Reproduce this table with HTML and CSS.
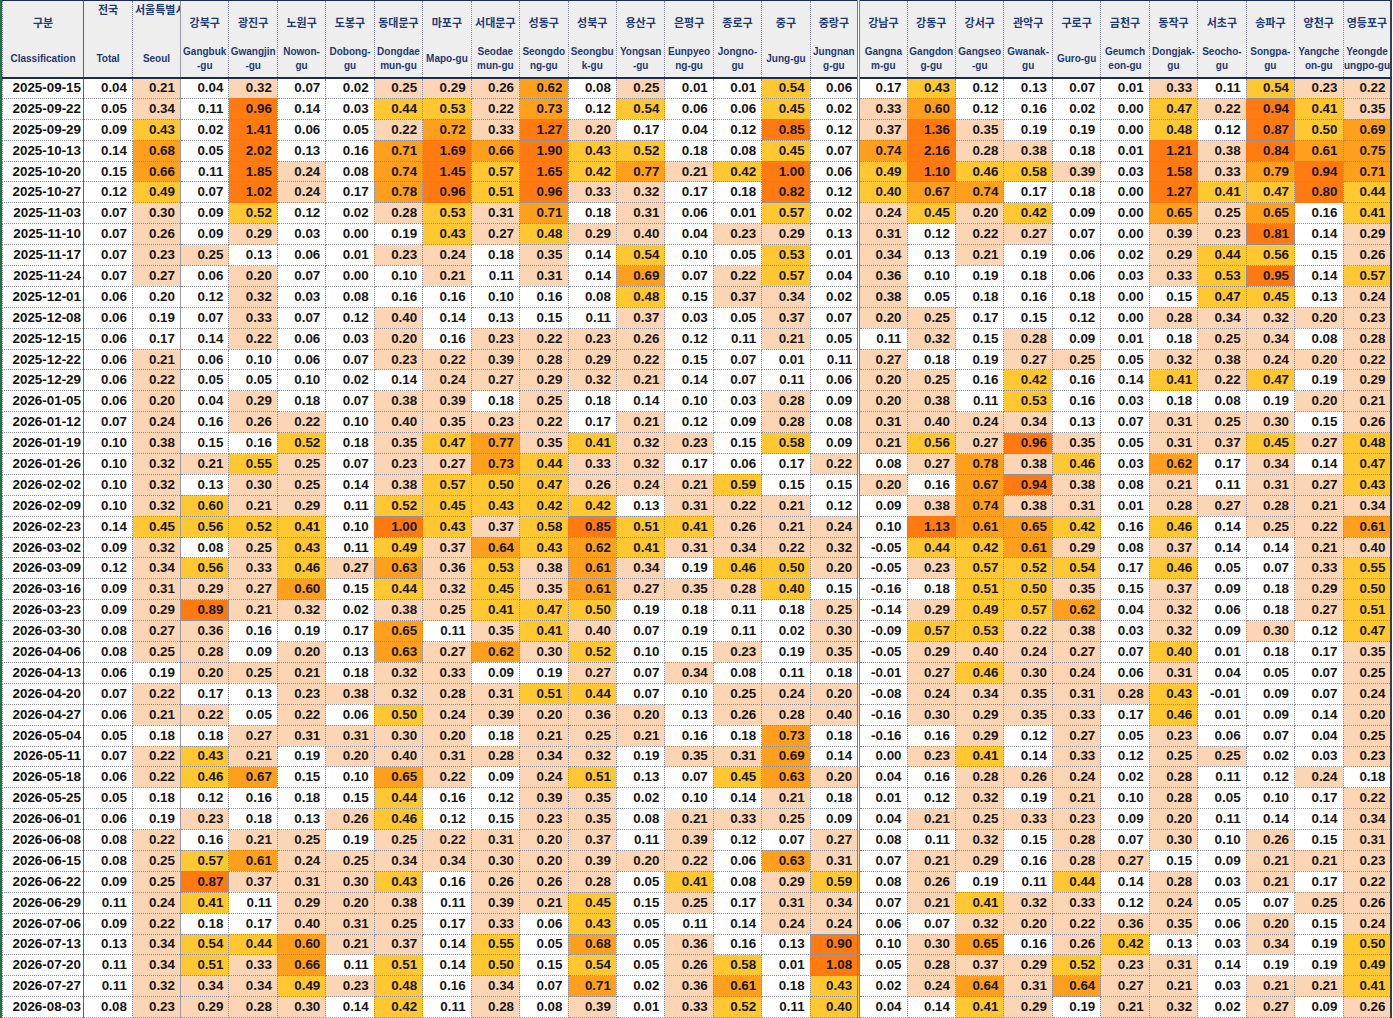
FILE: index.html
```html
<!DOCTYPE html>
<html lang="ko">
<head>
<meta charset="utf-8">
<title>서울 주간 아파트 매매가격 변동률</title>
<link rel="stylesheet" href="styles.css">
</head>
<body>
<div class="sheet">
<table class="grid">
<colgroup>
<col class="c-date"><col class="c-total"><col class="c-seoul">
<col class="c-gu"><col class="c-gu"><col class="c-gu"><col class="c-gu"><col class="c-gu"><col class="c-gu"><col class="c-gu"><col class="c-gu"><col class="c-gu"><col class="c-gu"><col class="c-gu"><col class="c-gu"><col class="c-gu"><col class="c-gu">
<col class="c-gu"><col class="c-gu"><col class="c-gu"><col class="c-gu"><col class="c-gu"><col class="c-gu"><col class="c-gu"><col class="c-gu"><col class="c-gu"><col class="c-gu"><col class="c-gu">
</colgroup>
<thead>
<tr>
<th><div class="ko">구분</div><div class="en">Classification</div></th>
<th class="top"><div class="ko">전국</div><div class="en">Total</div></th>
<th class="top"><div class="ko clip">서울특별시</div><div class="en">Seoul</div></th>
<th><div class="ko">강북구</div><div class="en">Gangbuk<br>-gu</div></th>
<th><div class="ko">광진구</div><div class="en">Gwangjin<br>-gu</div></th>
<th><div class="ko">노원구</div><div class="en">Nowon-<br>gu</div></th>
<th><div class="ko">도봉구</div><div class="en">Dobong-<br>gu</div></th>
<th><div class="ko">동대문구</div><div class="en">Dongdae<br>mun-gu</div></th>
<th><div class="ko">마포구</div><div class="en">Mapo-gu</div></th>
<th><div class="ko">서대문구</div><div class="en">Seodae<br>mun-gu</div></th>
<th><div class="ko">성동구</div><div class="en">Seongdo<br>ng-gu</div></th>
<th><div class="ko">성북구</div><div class="en">Seongbu<br>k-gu</div></th>
<th><div class="ko">용산구</div><div class="en">Yongsan<br>-gu</div></th>
<th><div class="ko">은평구</div><div class="en">Eunpyeo<br>ng-gu</div></th>
<th><div class="ko">종로구</div><div class="en">Jongno-<br>gu</div></th>
<th><div class="ko">중구</div><div class="en">Jung-gu</div></th>
<th><div class="ko">중랑구</div><div class="en">Jungnan<br>g-gu</div></th>
<th><div class="ko">강남구</div><div class="en">Gangna<br>m-gu</div></th>
<th><div class="ko">강동구</div><div class="en">Gangdon<br>g-gu</div></th>
<th><div class="ko">강서구</div><div class="en">Gangseo<br>-gu</div></th>
<th><div class="ko">관악구</div><div class="en">Gwanak-<br>gu</div></th>
<th><div class="ko">구로구</div><div class="en">Guro-gu</div></th>
<th><div class="ko">금천구</div><div class="en">Geumch<br>eon-gu</div></th>
<th><div class="ko">동작구</div><div class="en">Dongjak-<br>gu</div></th>
<th><div class="ko">서초구</div><div class="en">Seocho-<br>gu</div></th>
<th><div class="ko">송파구</div><div class="en">Songpa-<br>gu</div></th>
<th><div class="ko">양천구</div><div class="en">Yangche<br>on-gu</div></th>
<th><div class="ko">영등포구</div><div class="en">Yeongde<br>ungpo-gu</div></th>
</tr>
</thead>
<tbody>
<tr><td class="dt">2025-09-15</td><td>0.04</td><td class="l1">0.21</td><td>0.04</td><td class="l1">0.32</td><td>0.07</td><td>0.02</td><td class="l1">0.25</td><td class="l1">0.29</td><td class="l1">0.26</td><td class="l3">0.62</td><td>0.08</td><td class="l1">0.25</td><td>0.01</td><td>0.01</td><td class="l2">0.54</td><td>0.06</td><td>0.17</td><td class="l2">0.43</td><td>0.12</td><td>0.13</td><td>0.07</td><td>0.01</td><td class="l1">0.33</td><td>0.11</td><td class="l2">0.54</td><td class="l1">0.23</td><td class="l1">0.22</td></tr>
<tr><td class="dt">2025-09-22</td><td>0.05</td><td class="l1">0.34</td><td>0.11</td><td class="l4">0.96</td><td>0.14</td><td>0.03</td><td class="l2">0.44</td><td class="l2">0.53</td><td class="l1">0.22</td><td class="l3">0.73</td><td>0.12</td><td class="l2">0.54</td><td>0.06</td><td>0.06</td><td class="l2">0.45</td><td>0.02</td><td class="l1">0.33</td><td class="l3">0.60</td><td>0.12</td><td>0.16</td><td>0.02</td><td>0.00</td><td class="l2">0.47</td><td class="l1">0.22</td><td class="l4">0.94</td><td class="l2">0.41</td><td class="l1">0.35</td></tr>
<tr><td class="dt">2025-09-29</td><td>0.09</td><td class="l2">0.43</td><td>0.02</td><td class="l4">1.41</td><td>0.06</td><td>0.05</td><td class="l1">0.22</td><td class="l3">0.72</td><td class="l1">0.33</td><td class="l4">1.27</td><td class="l1">0.20</td><td>0.17</td><td>0.04</td><td>0.12</td><td class="l4">0.85</td><td>0.12</td><td class="l1">0.37</td><td class="l4">1.36</td><td class="l1">0.35</td><td>0.19</td><td>0.19</td><td>0.00</td><td class="l2">0.48</td><td>0.12</td><td class="l4">0.87</td><td class="l2">0.50</td><td class="l3">0.69</td></tr>
<tr><td class="dt">2025-10-13</td><td>0.14</td><td class="l3">0.68</td><td>0.05</td><td class="l4">2.02</td><td>0.13</td><td>0.16</td><td class="l3">0.71</td><td class="l4">1.69</td><td class="l3">0.66</td><td class="l4">1.90</td><td class="l2">0.43</td><td class="l2">0.52</td><td>0.18</td><td>0.08</td><td class="l2">0.45</td><td>0.07</td><td class="l3">0.74</td><td class="l4">2.16</td><td class="l1">0.28</td><td class="l1">0.38</td><td>0.18</td><td>0.01</td><td class="l4">1.21</td><td class="l1">0.38</td><td class="l4">0.84</td><td class="l3">0.61</td><td class="l3">0.75</td></tr>
<tr><td class="dt">2025-10-20</td><td>0.15</td><td class="l3">0.66</td><td>0.11</td><td class="l4">1.85</td><td class="l1">0.24</td><td>0.08</td><td class="l3">0.74</td><td class="l4">1.45</td><td class="l2">0.57</td><td class="l4">1.65</td><td class="l2">0.42</td><td class="l3">0.77</td><td class="l1">0.21</td><td class="l2">0.42</td><td class="l4">1.00</td><td>0.06</td><td class="l2">0.49</td><td class="l4">1.10</td><td class="l2">0.46</td><td class="l2">0.58</td><td class="l1">0.39</td><td>0.03</td><td class="l4">1.58</td><td class="l1">0.33</td><td class="l3">0.79</td><td class="l4">0.94</td><td class="l3">0.71</td></tr>
<tr><td class="dt">2025-10-27</td><td>0.12</td><td class="l2">0.49</td><td>0.07</td><td class="l4">1.02</td><td class="l1">0.24</td><td>0.17</td><td class="l3">0.78</td><td class="l4">0.96</td><td class="l2">0.51</td><td class="l4">0.96</td><td class="l1">0.33</td><td class="l1">0.32</td><td>0.17</td><td>0.18</td><td class="l4">0.82</td><td>0.12</td><td class="l2">0.40</td><td class="l3">0.67</td><td class="l3">0.74</td><td>0.17</td><td>0.18</td><td>0.00</td><td class="l4">1.27</td><td class="l2">0.41</td><td class="l2">0.47</td><td class="l4">0.80</td><td class="l2">0.44</td></tr>
<tr><td class="dt">2025-11-03</td><td>0.07</td><td class="l1">0.30</td><td>0.09</td><td class="l2">0.52</td><td>0.12</td><td>0.02</td><td class="l1">0.28</td><td class="l2">0.53</td><td class="l1">0.31</td><td class="l3">0.71</td><td>0.18</td><td class="l1">0.31</td><td>0.06</td><td>0.01</td><td class="l2">0.57</td><td>0.02</td><td class="l1">0.24</td><td class="l2">0.45</td><td class="l1">0.20</td><td class="l2">0.42</td><td>0.09</td><td>0.00</td><td class="l3">0.65</td><td class="l1">0.25</td><td class="l3">0.65</td><td>0.16</td><td class="l2">0.41</td></tr>
<tr><td class="dt">2025-11-10</td><td>0.07</td><td class="l1">0.26</td><td>0.09</td><td class="l1">0.29</td><td>0.03</td><td>0.00</td><td>0.19</td><td class="l2">0.43</td><td class="l1">0.27</td><td class="l2">0.48</td><td class="l1">0.29</td><td class="l1">0.40</td><td>0.04</td><td class="l1">0.23</td><td class="l1">0.29</td><td>0.13</td><td class="l1">0.31</td><td>0.12</td><td class="l1">0.22</td><td class="l1">0.27</td><td>0.07</td><td>0.00</td><td class="l1">0.39</td><td class="l1">0.23</td><td class="l4">0.81</td><td>0.14</td><td class="l1">0.29</td></tr>
<tr><td class="dt">2025-11-17</td><td>0.07</td><td class="l1">0.23</td><td class="l1">0.25</td><td>0.13</td><td>0.06</td><td>0.01</td><td class="l1">0.23</td><td class="l1">0.24</td><td>0.18</td><td class="l1">0.35</td><td>0.14</td><td class="l2">0.54</td><td>0.10</td><td>0.05</td><td class="l2">0.53</td><td>0.01</td><td class="l1">0.34</td><td>0.13</td><td class="l1">0.21</td><td>0.19</td><td>0.06</td><td>0.02</td><td class="l1">0.29</td><td class="l2">0.44</td><td class="l2">0.56</td><td>0.15</td><td class="l1">0.26</td></tr>
<tr><td class="dt">2025-11-24</td><td>0.07</td><td class="l1">0.27</td><td>0.06</td><td class="l1">0.20</td><td>0.07</td><td>0.00</td><td>0.10</td><td class="l1">0.21</td><td>0.11</td><td class="l1">0.31</td><td>0.14</td><td class="l3">0.69</td><td>0.07</td><td class="l1">0.22</td><td class="l2">0.57</td><td>0.04</td><td class="l1">0.36</td><td>0.10</td><td>0.19</td><td>0.18</td><td>0.06</td><td>0.03</td><td class="l1">0.33</td><td class="l2">0.53</td><td class="l4">0.95</td><td>0.14</td><td class="l2">0.57</td></tr>
<tr><td class="dt">2025-12-01</td><td>0.06</td><td>0.20</td><td>0.12</td><td class="l1">0.32</td><td>0.03</td><td>0.08</td><td>0.16</td><td>0.16</td><td>0.10</td><td>0.16</td><td>0.08</td><td class="l2">0.48</td><td>0.15</td><td class="l1">0.37</td><td class="l1">0.34</td><td>0.02</td><td class="l1">0.38</td><td>0.05</td><td>0.18</td><td>0.16</td><td>0.18</td><td>0.00</td><td>0.15</td><td class="l2">0.47</td><td class="l2">0.45</td><td>0.13</td><td class="l1">0.24</td></tr>
<tr><td class="dt">2025-12-08</td><td>0.06</td><td>0.19</td><td>0.07</td><td class="l1">0.33</td><td>0.07</td><td>0.12</td><td class="l1">0.40</td><td>0.14</td><td>0.13</td><td>0.15</td><td>0.11</td><td class="l1">0.37</td><td>0.03</td><td>0.05</td><td class="l1">0.37</td><td>0.07</td><td class="l1">0.20</td><td class="l1">0.25</td><td>0.17</td><td>0.15</td><td>0.12</td><td>0.00</td><td class="l1">0.28</td><td class="l1">0.34</td><td class="l1">0.32</td><td class="l1">0.20</td><td class="l1">0.23</td></tr>
<tr><td class="dt">2025-12-15</td><td>0.06</td><td>0.17</td><td>0.14</td><td class="l1">0.22</td><td>0.06</td><td>0.03</td><td class="l1">0.20</td><td>0.16</td><td class="l1">0.23</td><td class="l1">0.22</td><td class="l1">0.23</td><td class="l1">0.26</td><td>0.12</td><td>0.11</td><td class="l1">0.21</td><td>0.05</td><td>0.11</td><td class="l1">0.32</td><td>0.15</td><td class="l1">0.28</td><td>0.09</td><td>0.01</td><td>0.18</td><td class="l1">0.25</td><td class="l1">0.34</td><td>0.08</td><td class="l1">0.28</td></tr>
<tr><td class="dt">2025-12-22</td><td>0.06</td><td class="l1">0.21</td><td>0.06</td><td>0.10</td><td>0.06</td><td>0.07</td><td class="l1">0.23</td><td class="l1">0.22</td><td class="l1">0.39</td><td class="l1">0.28</td><td class="l1">0.29</td><td class="l1">0.22</td><td>0.15</td><td>0.07</td><td>0.01</td><td>0.11</td><td class="l1">0.27</td><td>0.18</td><td>0.19</td><td class="l1">0.27</td><td class="l1">0.25</td><td>0.05</td><td class="l1">0.32</td><td class="l1">0.38</td><td class="l1">0.24</td><td class="l1">0.20</td><td class="l1">0.22</td></tr>
<tr><td class="dt">2025-12-29</td><td>0.06</td><td class="l1">0.22</td><td>0.05</td><td>0.05</td><td>0.10</td><td>0.02</td><td>0.14</td><td class="l1">0.24</td><td class="l1">0.27</td><td class="l1">0.29</td><td class="l1">0.32</td><td class="l1">0.21</td><td>0.14</td><td>0.07</td><td>0.11</td><td>0.06</td><td class="l1">0.20</td><td class="l1">0.25</td><td>0.16</td><td class="l2">0.42</td><td>0.16</td><td>0.14</td><td class="l2">0.41</td><td class="l1">0.22</td><td class="l2">0.47</td><td>0.19</td><td class="l1">0.29</td></tr>
<tr><td class="dt">2026-01-05</td><td>0.06</td><td class="l1">0.20</td><td>0.04</td><td class="l1">0.29</td><td>0.18</td><td>0.07</td><td class="l1">0.38</td><td class="l1">0.39</td><td>0.18</td><td class="l1">0.25</td><td>0.18</td><td>0.14</td><td>0.10</td><td>0.03</td><td class="l1">0.28</td><td>0.09</td><td class="l1">0.20</td><td class="l1">0.38</td><td>0.11</td><td class="l2">0.53</td><td>0.16</td><td>0.03</td><td>0.18</td><td>0.08</td><td>0.19</td><td class="l1">0.20</td><td class="l1">0.21</td></tr>
<tr><td class="dt">2026-01-12</td><td>0.07</td><td class="l1">0.24</td><td>0.16</td><td class="l1">0.26</td><td class="l1">0.22</td><td>0.10</td><td class="l1">0.40</td><td class="l1">0.35</td><td class="l1">0.23</td><td class="l1">0.22</td><td>0.17</td><td class="l1">0.21</td><td>0.12</td><td>0.09</td><td class="l1">0.28</td><td>0.08</td><td class="l1">0.31</td><td class="l1">0.40</td><td class="l1">0.24</td><td class="l1">0.34</td><td>0.13</td><td>0.07</td><td class="l1">0.31</td><td class="l1">0.25</td><td class="l1">0.30</td><td>0.15</td><td class="l1">0.26</td></tr>
<tr><td class="dt">2026-01-19</td><td>0.10</td><td class="l1">0.38</td><td>0.15</td><td>0.16</td><td class="l2">0.52</td><td>0.18</td><td class="l1">0.35</td><td class="l2">0.47</td><td class="l3">0.77</td><td class="l1">0.35</td><td class="l2">0.41</td><td class="l1">0.32</td><td class="l1">0.23</td><td>0.15</td><td class="l2">0.58</td><td>0.09</td><td class="l1">0.21</td><td class="l2">0.56</td><td class="l1">0.27</td><td class="l4">0.96</td><td class="l1">0.35</td><td>0.05</td><td class="l1">0.31</td><td class="l1">0.37</td><td class="l2">0.45</td><td class="l1">0.27</td><td class="l2">0.48</td></tr>
<tr><td class="dt">2026-01-26</td><td>0.10</td><td class="l1">0.32</td><td class="l1">0.21</td><td class="l2">0.55</td><td class="l1">0.25</td><td>0.07</td><td class="l1">0.23</td><td class="l1">0.27</td><td class="l3">0.73</td><td class="l2">0.44</td><td class="l1">0.33</td><td class="l1">0.32</td><td>0.17</td><td>0.06</td><td>0.17</td><td class="l1">0.22</td><td>0.08</td><td class="l1">0.27</td><td class="l3">0.78</td><td class="l1">0.38</td><td class="l2">0.46</td><td>0.03</td><td class="l3">0.62</td><td>0.17</td><td class="l1">0.34</td><td>0.14</td><td class="l2">0.47</td></tr>
<tr><td class="dt">2026-02-02</td><td>0.10</td><td class="l1">0.32</td><td>0.13</td><td class="l1">0.30</td><td class="l1">0.25</td><td>0.14</td><td class="l1">0.38</td><td class="l2">0.57</td><td class="l2">0.50</td><td class="l2">0.47</td><td class="l1">0.26</td><td class="l1">0.24</td><td class="l1">0.21</td><td class="l2">0.59</td><td>0.15</td><td>0.15</td><td class="l1">0.20</td><td>0.16</td><td class="l3">0.67</td><td class="l4">0.94</td><td class="l1">0.38</td><td>0.08</td><td class="l1">0.21</td><td>0.11</td><td class="l1">0.31</td><td class="l1">0.27</td><td class="l2">0.43</td></tr>
<tr><td class="dt">2026-02-09</td><td>0.10</td><td class="l1">0.32</td><td class="l2">0.60</td><td class="l1">0.21</td><td class="l1">0.29</td><td>0.11</td><td class="l2">0.52</td><td class="l2">0.45</td><td class="l2">0.43</td><td class="l2">0.42</td><td class="l2">0.42</td><td>0.13</td><td class="l1">0.31</td><td class="l1">0.22</td><td class="l1">0.21</td><td>0.12</td><td>0.09</td><td class="l1">0.38</td><td class="l3">0.74</td><td class="l1">0.38</td><td class="l1">0.31</td><td>0.01</td><td class="l1">0.28</td><td class="l1">0.27</td><td class="l1">0.28</td><td class="l1">0.21</td><td class="l1">0.34</td></tr>
<tr><td class="dt">2026-02-23</td><td>0.14</td><td class="l2">0.45</td><td class="l2">0.56</td><td class="l2">0.52</td><td class="l2">0.41</td><td>0.10</td><td class="l4">1.00</td><td class="l2">0.43</td><td class="l1">0.37</td><td class="l2">0.58</td><td class="l4">0.85</td><td class="l2">0.51</td><td class="l2">0.41</td><td class="l1">0.26</td><td class="l1">0.21</td><td class="l1">0.24</td><td>0.10</td><td class="l4">1.13</td><td class="l3">0.61</td><td class="l3">0.65</td><td class="l2">0.42</td><td>0.16</td><td class="l2">0.46</td><td>0.14</td><td class="l1">0.25</td><td class="l1">0.22</td><td class="l3">0.61</td></tr>
<tr><td class="dt">2026-03-02</td><td>0.09</td><td class="l1">0.32</td><td>0.08</td><td class="l1">0.25</td><td class="l2">0.43</td><td>0.11</td><td class="l2">0.49</td><td class="l1">0.37</td><td class="l3">0.64</td><td class="l2">0.43</td><td class="l3">0.62</td><td class="l2">0.41</td><td class="l1">0.31</td><td class="l1">0.34</td><td class="l1">0.22</td><td class="l1">0.32</td><td>-0.05</td><td class="l2">0.44</td><td class="l2">0.42</td><td class="l3">0.61</td><td class="l1">0.29</td><td>0.08</td><td class="l1">0.37</td><td>0.14</td><td>0.14</td><td class="l1">0.21</td><td class="l1">0.40</td></tr>
<tr><td class="dt">2026-03-09</td><td>0.12</td><td class="l1">0.34</td><td class="l2">0.56</td><td class="l1">0.33</td><td class="l2">0.46</td><td class="l1">0.27</td><td class="l3">0.63</td><td class="l1">0.36</td><td class="l2">0.53</td><td class="l1">0.38</td><td class="l3">0.61</td><td class="l1">0.34</td><td>0.19</td><td class="l2">0.46</td><td class="l2">0.50</td><td class="l1">0.20</td><td>-0.05</td><td class="l1">0.23</td><td class="l2">0.57</td><td class="l2">0.52</td><td class="l2">0.54</td><td>0.17</td><td class="l2">0.46</td><td>0.05</td><td>0.07</td><td class="l1">0.33</td><td class="l2">0.55</td></tr>
<tr><td class="dt">2026-03-16</td><td>0.09</td><td class="l1">0.31</td><td class="l1">0.29</td><td class="l1">0.27</td><td class="l3">0.60</td><td>0.15</td><td class="l2">0.44</td><td class="l1">0.32</td><td class="l2">0.45</td><td class="l1">0.35</td><td class="l3">0.61</td><td class="l1">0.27</td><td class="l1">0.35</td><td class="l1">0.28</td><td class="l2">0.40</td><td>0.15</td><td>-0.16</td><td>0.18</td><td class="l2">0.51</td><td class="l2">0.50</td><td class="l1">0.35</td><td>0.15</td><td class="l1">0.37</td><td>0.09</td><td>0.18</td><td class="l1">0.29</td><td class="l2">0.50</td></tr>
<tr><td class="dt">2026-03-23</td><td>0.09</td><td class="l1">0.29</td><td class="l4">0.89</td><td class="l1">0.21</td><td class="l1">0.32</td><td>0.02</td><td class="l1">0.38</td><td class="l1">0.25</td><td class="l2">0.41</td><td class="l2">0.47</td><td class="l2">0.50</td><td>0.19</td><td>0.18</td><td>0.11</td><td>0.18</td><td class="l1">0.25</td><td>-0.14</td><td class="l1">0.29</td><td class="l2">0.49</td><td class="l2">0.57</td><td class="l3">0.62</td><td>0.04</td><td class="l1">0.32</td><td>0.06</td><td>0.18</td><td class="l1">0.27</td><td class="l2">0.51</td></tr>
<tr><td class="dt">2026-03-30</td><td>0.08</td><td class="l1">0.27</td><td class="l1">0.36</td><td>0.16</td><td>0.19</td><td>0.17</td><td class="l3">0.65</td><td>0.11</td><td class="l1">0.35</td><td class="l2">0.41</td><td class="l1">0.40</td><td>0.07</td><td>0.19</td><td>0.11</td><td>0.02</td><td class="l1">0.30</td><td>-0.09</td><td class="l2">0.57</td><td class="l2">0.53</td><td class="l1">0.22</td><td class="l1">0.38</td><td>0.03</td><td class="l1">0.32</td><td>0.09</td><td class="l1">0.30</td><td>0.12</td><td class="l2">0.47</td></tr>
<tr><td class="dt">2026-04-06</td><td>0.08</td><td class="l1">0.25</td><td class="l1">0.28</td><td>0.09</td><td class="l1">0.20</td><td>0.13</td><td class="l3">0.63</td><td class="l1">0.27</td><td class="l3">0.62</td><td class="l1">0.30</td><td class="l2">0.52</td><td>0.10</td><td>0.15</td><td class="l1">0.23</td><td>0.19</td><td class="l1">0.35</td><td>-0.05</td><td class="l1">0.29</td><td class="l1">0.40</td><td class="l1">0.24</td><td class="l1">0.27</td><td>0.07</td><td class="l2">0.40</td><td>0.01</td><td>0.18</td><td>0.17</td><td class="l1">0.35</td></tr>
<tr><td class="dt">2026-04-13</td><td>0.06</td><td>0.19</td><td class="l1">0.20</td><td class="l1">0.25</td><td class="l1">0.21</td><td>0.18</td><td class="l1">0.32</td><td class="l1">0.33</td><td>0.09</td><td>0.19</td><td class="l1">0.27</td><td>0.07</td><td class="l1">0.34</td><td>0.08</td><td>0.11</td><td>0.18</td><td>-0.01</td><td class="l1">0.27</td><td class="l2">0.46</td><td class="l1">0.30</td><td class="l1">0.24</td><td>0.06</td><td class="l1">0.31</td><td>0.04</td><td>0.05</td><td>0.07</td><td class="l1">0.25</td></tr>
<tr><td class="dt">2026-04-20</td><td>0.07</td><td class="l1">0.22</td><td>0.17</td><td>0.13</td><td class="l1">0.23</td><td class="l1">0.38</td><td class="l1">0.32</td><td class="l1">0.28</td><td class="l1">0.31</td><td class="l2">0.51</td><td class="l2">0.44</td><td>0.07</td><td>0.10</td><td class="l1">0.25</td><td class="l1">0.24</td><td class="l1">0.20</td><td>-0.08</td><td class="l1">0.24</td><td class="l1">0.34</td><td class="l1">0.35</td><td class="l1">0.31</td><td class="l1">0.28</td><td class="l2">0.43</td><td>-0.01</td><td>0.09</td><td>0.07</td><td class="l1">0.24</td></tr>
<tr><td class="dt">2026-04-27</td><td>0.06</td><td class="l1">0.21</td><td class="l1">0.22</td><td>0.05</td><td class="l1">0.22</td><td>0.06</td><td class="l2">0.50</td><td class="l1">0.24</td><td class="l1">0.39</td><td class="l1">0.20</td><td class="l1">0.36</td><td class="l1">0.20</td><td>0.13</td><td class="l1">0.26</td><td class="l1">0.28</td><td class="l1">0.40</td><td>-0.16</td><td class="l1">0.30</td><td class="l1">0.29</td><td class="l1">0.35</td><td class="l1">0.33</td><td>0.17</td><td class="l2">0.46</td><td>0.01</td><td>0.09</td><td>0.14</td><td class="l1">0.20</td></tr>
<tr><td class="dt">2026-05-04</td><td>0.05</td><td>0.18</td><td>0.18</td><td class="l1">0.27</td><td class="l1">0.31</td><td class="l1">0.31</td><td class="l1">0.30</td><td class="l1">0.20</td><td>0.18</td><td class="l1">0.21</td><td class="l1">0.25</td><td class="l1">0.21</td><td>0.16</td><td>0.18</td><td class="l3">0.73</td><td>0.18</td><td>-0.16</td><td>0.16</td><td class="l1">0.29</td><td>0.12</td><td class="l1">0.27</td><td>0.05</td><td class="l1">0.23</td><td>0.06</td><td>0.07</td><td>0.04</td><td class="l1">0.25</td></tr>
<tr><td class="dt">2026-05-11</td><td>0.07</td><td class="l1">0.22</td><td class="l2">0.43</td><td class="l1">0.21</td><td>0.19</td><td class="l1">0.20</td><td class="l1">0.40</td><td class="l1">0.31</td><td class="l1">0.28</td><td class="l1">0.34</td><td class="l1">0.32</td><td>0.19</td><td class="l1">0.35</td><td class="l1">0.31</td><td class="l3">0.69</td><td>0.14</td><td>0.00</td><td class="l1">0.23</td><td class="l2">0.41</td><td>0.14</td><td class="l1">0.33</td><td>0.12</td><td class="l1">0.25</td><td class="l1">0.25</td><td>0.02</td><td>0.03</td><td class="l1">0.23</td></tr>
<tr><td class="dt">2026-05-18</td><td>0.06</td><td class="l1">0.22</td><td class="l2">0.46</td><td class="l3">0.67</td><td>0.15</td><td>0.10</td><td class="l3">0.65</td><td class="l1">0.22</td><td>0.09</td><td class="l1">0.24</td><td class="l2">0.51</td><td>0.13</td><td>0.07</td><td class="l2">0.45</td><td class="l3">0.63</td><td class="l1">0.20</td><td>0.04</td><td>0.16</td><td class="l1">0.28</td><td class="l1">0.26</td><td class="l1">0.24</td><td>0.02</td><td class="l1">0.28</td><td>0.11</td><td>0.12</td><td class="l1">0.24</td><td>0.18</td></tr>
<tr><td class="dt">2026-05-25</td><td>0.05</td><td>0.18</td><td>0.12</td><td>0.16</td><td>0.18</td><td>0.15</td><td class="l2">0.44</td><td>0.16</td><td>0.12</td><td class="l1">0.39</td><td class="l1">0.35</td><td>0.02</td><td>0.10</td><td>0.14</td><td class="l1">0.21</td><td>0.18</td><td>0.01</td><td>0.12</td><td class="l1">0.32</td><td>0.19</td><td class="l1">0.21</td><td>0.10</td><td class="l1">0.28</td><td>0.05</td><td>0.10</td><td>0.17</td><td class="l1">0.22</td></tr>
<tr><td class="dt">2026-06-01</td><td>0.06</td><td>0.19</td><td class="l1">0.23</td><td>0.18</td><td>0.13</td><td class="l1">0.26</td><td class="l2">0.46</td><td>0.12</td><td>0.15</td><td class="l1">0.23</td><td class="l1">0.35</td><td>0.08</td><td class="l1">0.21</td><td class="l1">0.33</td><td class="l1">0.25</td><td>0.09</td><td>0.04</td><td class="l1">0.21</td><td class="l1">0.25</td><td class="l1">0.33</td><td class="l1">0.23</td><td>0.09</td><td class="l1">0.20</td><td>0.11</td><td>0.14</td><td>0.14</td><td class="l1">0.34</td></tr>
<tr><td class="dt">2026-06-08</td><td>0.08</td><td class="l1">0.22</td><td>0.16</td><td class="l1">0.21</td><td class="l1">0.25</td><td>0.19</td><td class="l1">0.25</td><td class="l1">0.22</td><td class="l1">0.31</td><td class="l1">0.20</td><td class="l1">0.37</td><td>0.11</td><td class="l1">0.39</td><td>0.12</td><td>0.07</td><td class="l1">0.27</td><td>0.08</td><td>0.11</td><td class="l1">0.32</td><td>0.15</td><td class="l1">0.28</td><td>0.07</td><td class="l1">0.30</td><td>0.10</td><td class="l1">0.26</td><td>0.15</td><td class="l1">0.31</td></tr>
<tr><td class="dt">2026-06-15</td><td>0.08</td><td class="l1">0.25</td><td class="l2">0.57</td><td class="l3">0.61</td><td class="l1">0.24</td><td class="l1">0.25</td><td class="l1">0.34</td><td class="l1">0.34</td><td class="l1">0.30</td><td class="l1">0.20</td><td class="l1">0.39</td><td class="l1">0.20</td><td class="l1">0.22</td><td>0.06</td><td class="l3">0.63</td><td class="l1">0.31</td><td>0.07</td><td class="l1">0.21</td><td class="l1">0.29</td><td>0.16</td><td class="l1">0.28</td><td class="l1">0.27</td><td>0.15</td><td>0.09</td><td class="l1">0.21</td><td class="l1">0.21</td><td class="l1">0.23</td></tr>
<tr><td class="dt">2026-06-22</td><td>0.09</td><td class="l1">0.25</td><td class="l4">0.87</td><td class="l1">0.37</td><td class="l1">0.31</td><td class="l1">0.30</td><td class="l2">0.43</td><td>0.16</td><td class="l1">0.26</td><td class="l1">0.26</td><td class="l1">0.28</td><td>0.05</td><td class="l2">0.41</td><td>0.08</td><td class="l1">0.29</td><td class="l2">0.59</td><td>0.08</td><td class="l1">0.26</td><td>0.19</td><td>0.11</td><td class="l2">0.44</td><td>0.14</td><td class="l1">0.28</td><td>0.03</td><td class="l1">0.21</td><td>0.17</td><td class="l1">0.22</td></tr>
<tr><td class="dt">2026-06-29</td><td>0.11</td><td class="l1">0.24</td><td class="l2">0.41</td><td>0.11</td><td class="l1">0.29</td><td class="l1">0.20</td><td class="l1">0.38</td><td>0.11</td><td class="l1">0.39</td><td class="l1">0.21</td><td class="l2">0.45</td><td>0.15</td><td class="l1">0.25</td><td>0.17</td><td class="l1">0.31</td><td class="l1">0.34</td><td>0.07</td><td class="l1">0.21</td><td class="l2">0.41</td><td class="l1">0.32</td><td class="l1">0.33</td><td>0.12</td><td class="l1">0.24</td><td>0.05</td><td>0.07</td><td class="l1">0.25</td><td class="l1">0.26</td></tr>
<tr><td class="dt">2026-07-06</td><td>0.09</td><td class="l1">0.22</td><td>0.18</td><td>0.17</td><td class="l1">0.40</td><td class="l1">0.31</td><td class="l1">0.25</td><td>0.17</td><td class="l1">0.33</td><td>0.06</td><td class="l2">0.43</td><td>0.05</td><td>0.11</td><td>0.14</td><td class="l1">0.24</td><td class="l1">0.24</td><td>0.06</td><td>0.07</td><td class="l1">0.32</td><td class="l1">0.20</td><td class="l1">0.22</td><td class="l1">0.36</td><td class="l1">0.35</td><td>0.06</td><td class="l1">0.20</td><td>0.15</td><td class="l1">0.24</td></tr>
<tr><td class="dt">2026-07-13</td><td>0.13</td><td class="l1">0.34</td><td class="l2">0.54</td><td class="l2">0.44</td><td class="l3">0.60</td><td class="l1">0.21</td><td class="l1">0.37</td><td>0.14</td><td class="l2">0.55</td><td>0.05</td><td class="l3">0.68</td><td>0.05</td><td class="l1">0.36</td><td>0.16</td><td>0.13</td><td class="l4">0.90</td><td>0.10</td><td class="l1">0.30</td><td class="l3">0.65</td><td>0.16</td><td class="l1">0.26</td><td class="l2">0.42</td><td>0.13</td><td>0.03</td><td class="l1">0.34</td><td>0.19</td><td class="l2">0.50</td></tr>
<tr><td class="dt">2026-07-20</td><td>0.11</td><td class="l1">0.34</td><td class="l2">0.51</td><td class="l1">0.33</td><td class="l3">0.66</td><td>0.11</td><td class="l2">0.51</td><td>0.14</td><td class="l2">0.50</td><td>0.15</td><td class="l2">0.54</td><td>0.05</td><td class="l1">0.26</td><td class="l2">0.58</td><td>0.01</td><td class="l4">1.08</td><td>0.05</td><td class="l1">0.28</td><td class="l1">0.37</td><td class="l1">0.29</td><td class="l2">0.52</td><td class="l1">0.23</td><td class="l1">0.31</td><td>0.14</td><td>0.19</td><td>0.19</td><td class="l2">0.49</td></tr>
<tr><td class="dt">2026-07-27</td><td>0.11</td><td class="l1">0.32</td><td class="l1">0.34</td><td class="l1">0.34</td><td class="l2">0.49</td><td class="l1">0.23</td><td class="l2">0.48</td><td>0.16</td><td class="l1">0.34</td><td>0.07</td><td class="l3">0.71</td><td>0.02</td><td class="l1">0.36</td><td class="l3">0.61</td><td>0.18</td><td class="l2">0.43</td><td>0.02</td><td class="l1">0.24</td><td class="l3">0.64</td><td class="l1">0.31</td><td class="l3">0.64</td><td class="l1">0.27</td><td class="l1">0.21</td><td>0.03</td><td class="l1">0.21</td><td class="l1">0.21</td><td class="l2">0.41</td></tr>
<tr><td class="dt">2026-08-03</td><td>0.08</td><td class="l1">0.23</td><td class="l1">0.29</td><td class="l1">0.28</td><td class="l1">0.30</td><td>0.14</td><td class="l2">0.42</td><td>0.11</td><td class="l1">0.28</td><td>0.08</td><td class="l1">0.39</td><td>0.01</td><td class="l1">0.33</td><td class="l2">0.52</td><td>0.11</td><td class="l2">0.40</td><td>0.04</td><td>0.14</td><td class="l2">0.41</td><td class="l1">0.29</td><td>0.19</td><td class="l1">0.21</td><td class="l1">0.32</td><td>0.02</td><td class="l1">0.27</td><td>0.09</td><td class="l1">0.26</td></tr>
</tbody>
</table>
</div>
</body>
</html>
```

FILE: styles.css
```css
* {
  box-sizing: border-box;
}

html,
body {
  margin: 0;
  padding: 0;
  background: #ffffff;
}

body {
  font-family: "Liberation Sans", Arial, "Noto Sans CJK KR", sans-serif;
  color: #1a1a1a;
}

.sheet {
  width: 1393px;
  height: 1018px;
  overflow: hidden;
  border-left: 2px solid #217346;
}

.grid {
  border-collapse: collapse;
  table-layout: fixed;
  width: 1389px;
}

.c-date { width: 81px; }
.c-total { width: 49px; }
.c-seoul { width: 48px; }
.c-gu { width: 48.44px; }

/* header */
.grid thead th {
  height: 77px;
  padding: 0;
  vertical-align: top;
  background: #eeeeef;
  color: #1f3a72;
  font-weight: 700;
  border-top: 1px solid #1c2c52;
  border-bottom: 2px solid #1c2c52;
  border-left: 1px dotted #8a8c9c;
  border-right: 1px dotted #8a8c9c;
  overflow: hidden;
}

.ko {
  height: 41px;
  display: flex;
  align-items: center;
  justify-content: center;
  font-family: "Noto Sans CJK KR", "Liberation Sans", sans-serif;
  font-size: 11px;
  font-weight: 700;
  white-space: nowrap;
  overflow: hidden;
}

.top .ko {
  align-items: flex-start;
  padding-top: 0;
  line-height: 16px;
}

.ko.clip {
  justify-content: flex-start;
  padding-left: 2px;
}

.en {
  height: 34px;
  display: flex;
  align-items: center;
  justify-content: center;
  text-align: center;
  font-family: "Liberation Sans", Arial, sans-serif;
  font-size: 10px;
  line-height: 14px;
  white-space: nowrap;
}

/* body */
.grid tbody tr {
  height: 20.9px;
}

.grid tbody td {
  padding: 0 5px 0 0;
  text-align: right;
  font-size: 13.4px;
  font-weight: 700;
  line-height: 18px;
  color: #161616;
  white-space: nowrap;
  border: 1px dotted #8d8f9e;
  background: #ffffff;
}

.grid tbody td.dt {
  padding-right: 2px;
  color: #111111;
}

/* special vertical rules */
.grid tr > :nth-child(2) {
  border-left: 1px solid #5f6274;
}

.grid tr > :nth-child(4) {
  border-left: 1px solid #9a9aa6;
}

.grid tr > :nth-child(18) {
  border-left: 3px double #7c7e8e;
}

.grid tr > :last-child {
  border-right: 2px solid #3a3d4f;
}

/* conditional-format levels */
.grid tbody td.l1 { background: #fcd5b5; }
.grid tbody td.l2 { background: #ffc833; }
.grid tbody td.l3 { background: #ff9f1e; }
.grid tbody td.l4 { background: #ff7b12; }
```
